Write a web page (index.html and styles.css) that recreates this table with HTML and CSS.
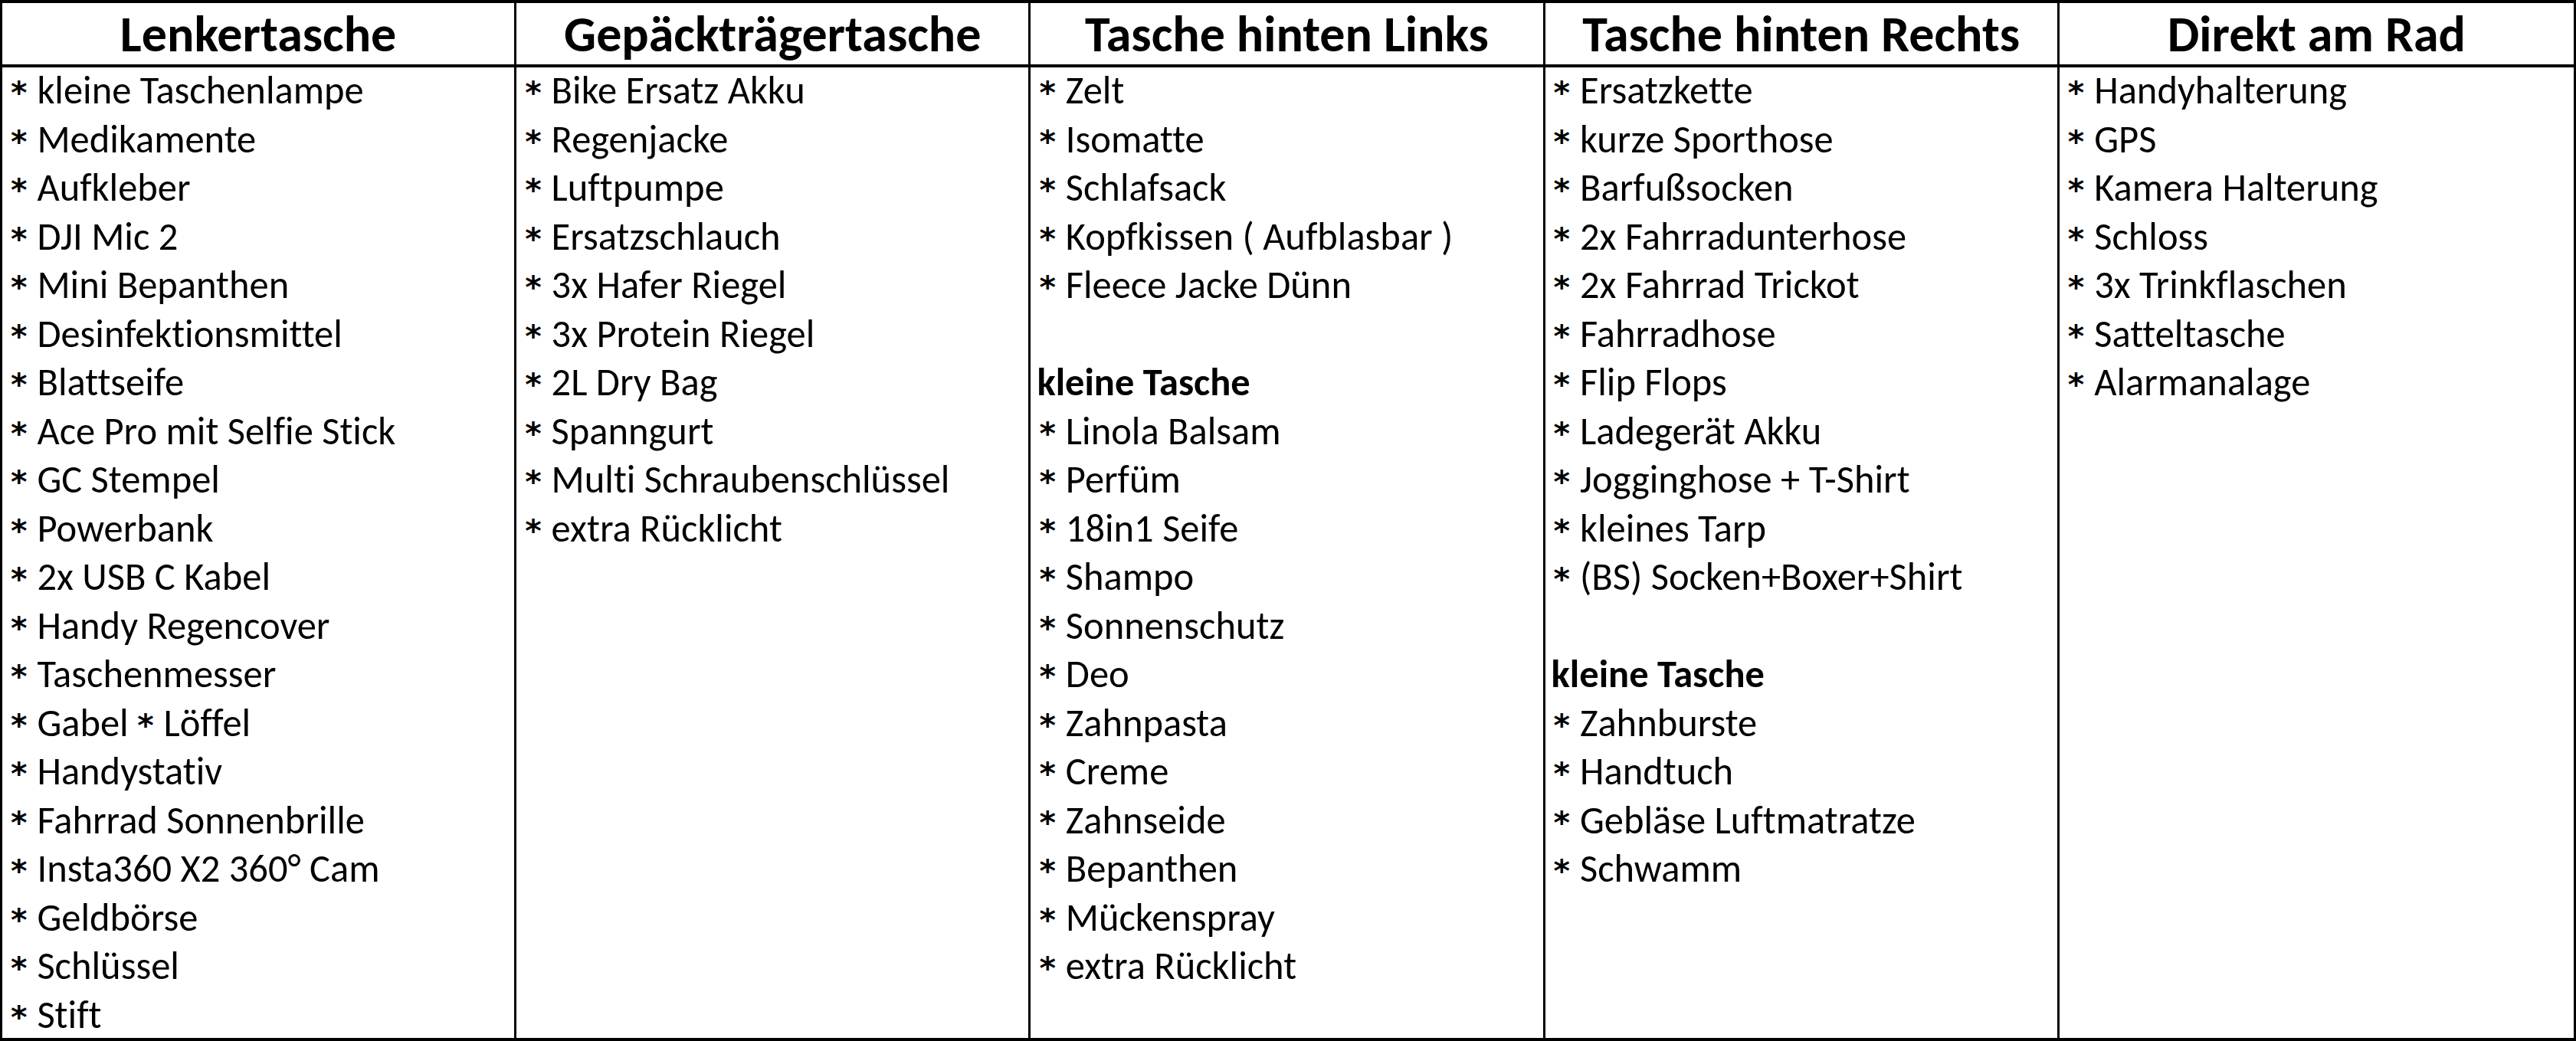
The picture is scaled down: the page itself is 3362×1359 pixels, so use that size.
FILE: index.html
```html
<!DOCTYPE html>
<html lang="de">
<head>
<meta charset="utf-8">
<title>Packliste</title>
<link rel="stylesheet" href="styles.css">
</head>
<body>
<div class="sheet">
  <section class="col">
    <h2 class="head">Lenkertasche</h2>
    <ul class="list">
      <li><span class="mark">*</span> kleine Taschenlampe</li>
      <li><span class="mark">*</span> Medikamente</li>
      <li><span class="mark">*</span> Aufkleber</li>
      <li><span class="mark">*</span> DJI Mic 2</li>
      <li><span class="mark">*</span> Mini Bepanthen</li>
      <li><span class="mark">*</span> Desinfektionsmittel</li>
      <li><span class="mark">*</span> Blattseife</li>
      <li><span class="mark">*</span> Ace Pro mit Selfie Stick</li>
      <li><span class="mark">*</span> GC Stempel</li>
      <li><span class="mark">*</span> Powerbank</li>
      <li><span class="mark">*</span> 2x USB C Kabel</li>
      <li><span class="mark">*</span> Handy Regencover</li>
      <li><span class="mark">*</span> Taschenmesser</li>
      <li><span class="mark">*</span> Gabel <span class="mark">*</span> Löffel</li>
      <li><span class="mark">*</span> Handystativ</li>
      <li><span class="mark">*</span> Fahrrad Sonnenbrille</li>
      <li><span class="mark">*</span> Insta360 X2 360° Cam</li>
      <li><span class="mark">*</span> Geldbörse</li>
      <li><span class="mark">*</span> Schlüssel</li>
      <li><span class="mark">*</span> Stift</li>
    </ul>
  </section>
  <section class="col">
    <h2 class="head">Gepäckträgertasche</h2>
    <ul class="list">
      <li><span class="mark">*</span> Bike Ersatz Akku</li>
      <li><span class="mark">*</span> Regenjacke</li>
      <li><span class="mark">*</span> Luftpumpe</li>
      <li><span class="mark">*</span> Ersatzschlauch</li>
      <li><span class="mark">*</span> 3x Hafer Riegel</li>
      <li><span class="mark">*</span> 3x Protein Riegel</li>
      <li><span class="mark">*</span> 2L Dry Bag</li>
      <li><span class="mark">*</span> Spanngurt</li>
      <li><span class="mark">*</span> Multi Schraubenschlüssel</li>
      <li><span class="mark">*</span> extra Rücklicht</li>
    </ul>
  </section>
  <section class="col">
    <h2 class="head">Tasche hinten Links</h2>
    <ul class="list">
      <li><span class="mark">*</span> Zelt</li>
      <li><span class="mark">*</span> Isomatte</li>
      <li><span class="mark">*</span> Schlafsack</li>
      <li><span class="mark">*</span> Kopfkissen ( Aufblasbar )</li>
      <li><span class="mark">*</span> Fleece Jacke Dünn</li>
      <li class="blank"></li>
      <li class="sub">kleine Tasche</li>
      <li><span class="mark">*</span> Linola Balsam</li>
      <li><span class="mark">*</span> Perfüm</li>
      <li><span class="mark">*</span> 18in1 Seife</li>
      <li><span class="mark">*</span> Shampo</li>
      <li><span class="mark">*</span> Sonnenschutz</li>
      <li><span class="mark">*</span> Deo</li>
      <li><span class="mark">*</span> Zahnpasta</li>
      <li><span class="mark">*</span> Creme</li>
      <li><span class="mark">*</span> Zahnseide</li>
      <li><span class="mark">*</span> Bepanthen</li>
      <li><span class="mark">*</span> Mückenspray</li>
      <li><span class="mark">*</span> extra Rücklicht</li>
    </ul>
  </section>
  <section class="col">
    <h2 class="head">Tasche hinten Rechts</h2>
    <ul class="list">
      <li><span class="mark">*</span> Ersatzkette</li>
      <li><span class="mark">*</span> kurze Sporthose</li>
      <li><span class="mark">*</span> Barfußsocken</li>
      <li><span class="mark">*</span> 2x Fahrradunterhose</li>
      <li><span class="mark">*</span> 2x Fahrrad Trickot</li>
      <li><span class="mark">*</span> Fahrradhose</li>
      <li><span class="mark">*</span> Flip Flops</li>
      <li><span class="mark">*</span> Ladegerät Akku</li>
      <li><span class="mark">*</span> Jogginghose + T-Shirt</li>
      <li><span class="mark">*</span> kleines Tarp</li>
      <li><span class="mark">*</span> (BS) Socken+Boxer+Shirt</li>
      <li class="blank"></li>
      <li class="sub">kleine Tasche</li>
      <li><span class="mark">*</span> Zahnburste</li>
      <li><span class="mark">*</span> Handtuch</li>
      <li><span class="mark">*</span> Gebläse Luftmatratze</li>
      <li><span class="mark">*</span> Schwamm</li>
    </ul>
  </section>
  <section class="col">
    <h2 class="head">Direkt am Rad</h2>
    <ul class="list">
      <li><span class="mark">*</span> Handyhalterung</li>
      <li><span class="mark">*</span> GPS</li>
      <li><span class="mark">*</span> Kamera Halterung</li>
      <li><span class="mark">*</span> Schloss</li>
      <li><span class="mark">*</span> 3x Trinkflaschen</li>
      <li><span class="mark">*</span> Satteltasche</li>
      <li><span class="mark">*</span> Alarmanalage</li>
    </ul>
  </section>
</div>
</body>
</html>
```

FILE: styles.css
```css
html, body {
  margin: 0;
  padding: 0;
  background: #fff;
}

body {
  font-family: "Carlito", "Lato", "Liberation Sans", sans-serif;
  color: #000;
}

.sheet {
  box-sizing: border-box;
  width: 3362px;
  height: 1359px;
  border-top: 4px solid #000;
  border-bottom: 4px solid #000;
  border-left: 3px solid #000;
  border-right: 3px solid #000;
  display: grid;
  grid-template-columns: repeat(5, 1fr);
  overflow: hidden;
}

.col {
  display: flex;
  flex-direction: column;
  border-right: 3px solid #000;
  min-width: 0;
  overflow: hidden;
}

.col:last-child {
  border-right: none;
}

.head {
  margin: 0;
  height: 80px;
  flex: none;
  border-bottom: 4px solid #000;
  display: flex;
  align-items: center;
  justify-content: center;
  font-size: 66px;
  font-weight: 700;
  white-space: nowrap;
  font-variant-ligatures: none;
}

.list {
  list-style: none;
  margin: 0;
  padding: 0 0 0 11px;
  flex: 1;
}

.list li {
  height: 63.5px;
  line-height: 60px;
  font-size: 50.5px;
  white-space: nowrap;
  font-variant-ligatures: none;
}

.list .sub {
  font-weight: 700;
  margin-left: -3px;
}

.mark {
  display: inline-block;
  width: 23px;
  font-family: "DejaVu Sans", sans-serif;
  font-weight: 700;
  font-size: 41px;
  line-height: 1;
}
```
